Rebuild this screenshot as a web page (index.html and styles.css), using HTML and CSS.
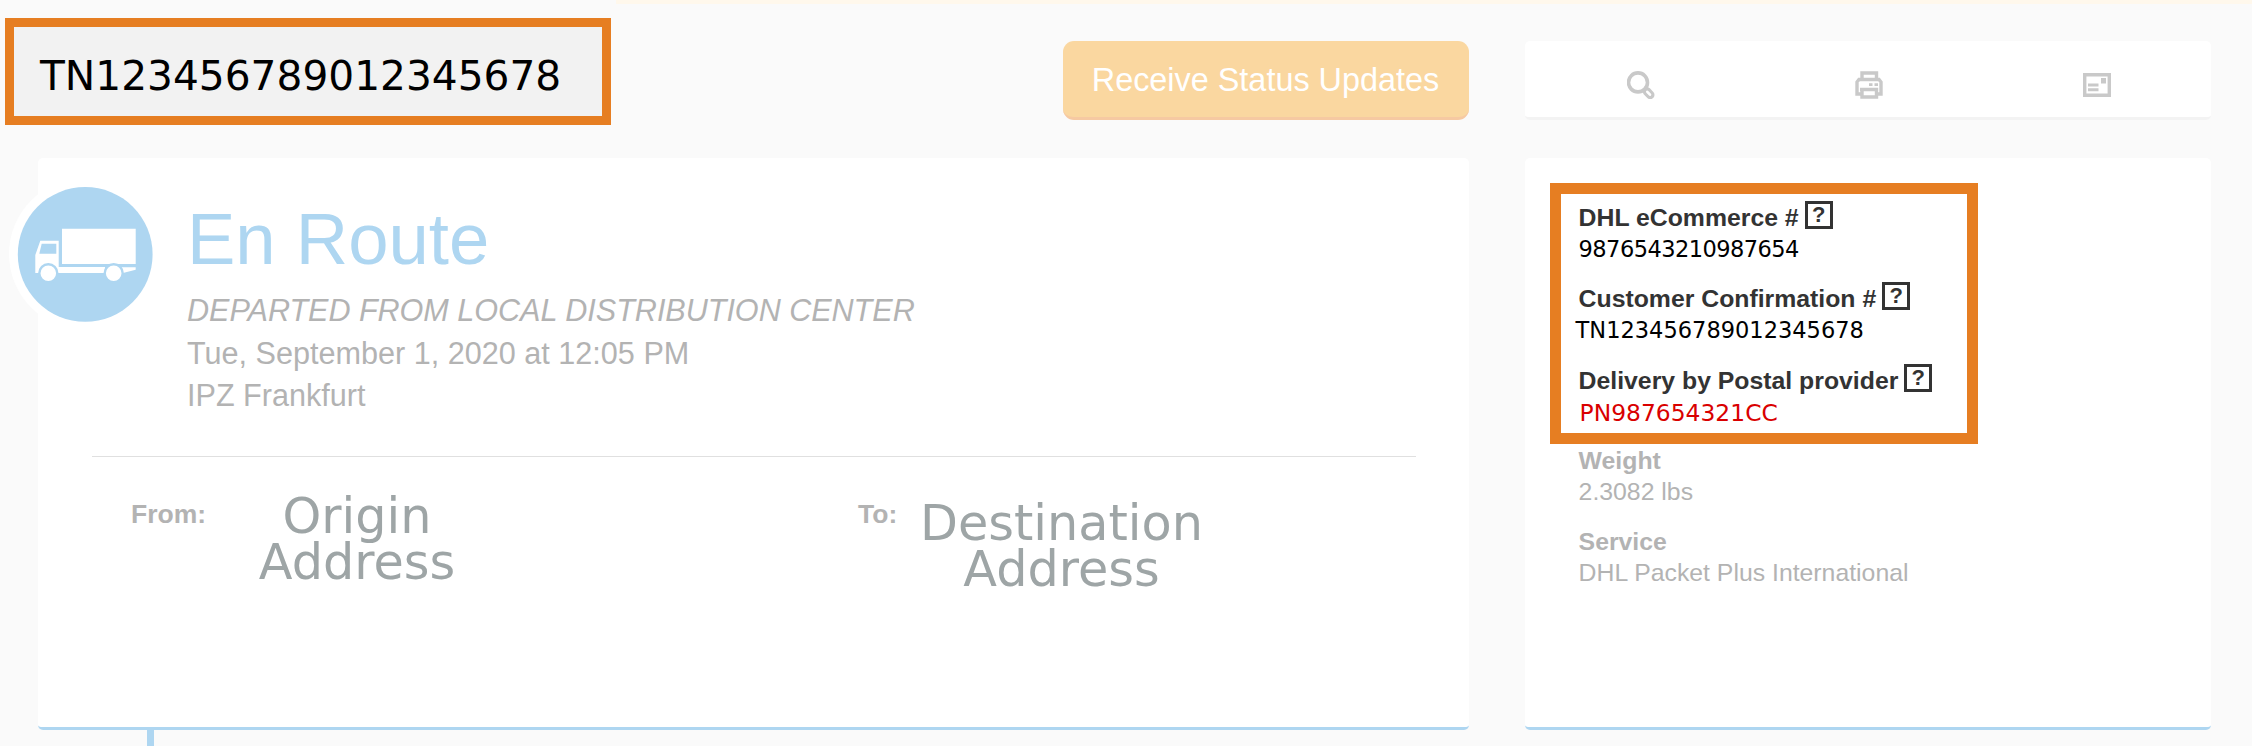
FILE: index.html
```html
<!DOCTYPE html>
<html lang="en">
<head>
<meta charset="utf-8">
<title>Shipment tracking</title>
<link rel="stylesheet" href="styles.css">
</head>
<body>
<div class="strip"></div>
<div class="page">
  <header class="topbar">
    <div class="tracking-number">TN123456789012345678</div>
    <button class="updates">Receive Status Updates</button>
  </header>
  <nav class="tools">
    <svg class="tool" viewBox="0 0 28 28"><path d="M20 20.500l3.200 3.400" stroke="#c9c9c9" stroke-width="8.600" stroke-linecap="round"/><path d="M20.300 20.800l2.700 2.900" stroke="#fff" stroke-width="2.600" stroke-linecap="round"/><circle cx="11" cy="11.400" r="9.500" fill="#fff" stroke="#c9c9c9" stroke-width="3.600"/></svg>
    <svg class="tool" viewBox="0 0 28 28" fill="none" stroke="#c9c9c9" stroke-width="3.400"><path d="M7 8.500V2h14.500v6.500M6.500 23H2V11l2-2.500h20l2 2.500v12h-4.500M7 18.500h14.500V26H7zM5 18.500h18"/><path d="M14 13.600h3.500M19.500 13.600H23" stroke-width="2.800"/></svg>
    <svg class="tool" viewBox="0 0 28 28" fill="none" stroke="#c9c9c9" stroke-width="3.400"><path d="M1.700 3.700h24.600v20.600H1.700z"/><path d="M5 14h10.500M5 18.700h10.500" stroke-width="3"/><path d="M20.500 7v5.500" stroke-width="5"/></svg>
  </nav>

  <main class="card status">
    <svg class="badge" viewBox="0 0 152 152">
      <circle cx="76" cy="76" r="76" fill="#fff"/>
      <circle cx="76.200" cy="76.400" r="67.400" fill="#aed6f1"/>
      <g fill="#fff">
        <path d="M53 50.700h73.700V86H53z"/>
        <path d="M26.300 95V77l5-14.300h18.400V89H96v6H26.300z"/>
        <path d="M112 89.300h14.700v2.400L114 95z"/>
      </g>
      <path d="M32.700 65.700h14.600v10H30.300z" fill="#aed6f1"/>
      <g fill="#fff" stroke="#aed6f1" stroke-width="2.400">
        <circle cx="39.300" cy="95.200" r="9"/>
        <circle cx="104.700" cy="95.200" r="9"/>
      </g>
    </svg>
    <section class="summary">
      <h1 class="headline">En Route</h1>
      <p class="line event">DEPARTED FROM LOCAL DISTRIBUTION CENTER</p>
      <p class="line">Tue, September 1, 2020 at 12:05 PM</p>
      <p class="line">IPZ Frankfurt</p>
    </section>
    <section class="route">
      <div class="leg from"><span class="leg-label">From:</span><div class="address">Origin<br>Address</div></div>
      <div class="leg to"><span class="leg-label">To:</span><div class="address">Destination<br>Address</div></div>
    </section>
  </main>

  <aside class="card details">
    <div class="callout">
      <div class="item first"><div class="label">DHL eCommerce #<span class="help">?</span></div><div class="number">9876543210987654</div></div>
      <div class="item second"><div class="label">Customer Confirmation #<span class="help">?</span></div><div class="number">TN123456789012345678</div></div>
      <div class="item third"><div class="label">Delivery by Postal provider<span class="help">?</span></div><div class="number">PN987654321CC</div></div>
    </div>
    <div class="facts">
      <div class="fact"><div class="label">Weight</div><div class="value">2.3082 lbs</div></div>
      <div class="fact"><div class="label">Service</div><div class="value">DHL Packet Plus International</div></div>
    </div>
  </aside>
</div>
<div class="timeline"></div>
</body>
</html>
```
FILE: styles.css
```css
* { box-sizing: border-box; }

body {
  margin: 0;
  width: 2252px;
  height: 746px;
  overflow: hidden;
  background: #fafafa;
  font-family: "Liberation Sans", Arial, sans-serif;
  color: #b3b3b3;
}

h1, p { margin: 0; font-weight: normal; }

.strip { height: 4px; margin-left: 616px; background: #fff8ec; }

.page {
  display: grid;
  grid-template-columns: 1431px 686px;
  grid-template-rows: 154px 572px;
  column-gap: 56px;
  padding-left: 38px;
}

.topbar { display: flex; align-items: flex-start; }

.tracking-number {
  width: 606px;
  height: 107px;
  margin: 14px 0 0 -33px;
  padding: 9px 0 0 26px;
  border: 9px solid #e67e22;
  background: #f2f2f2;
  color: #000;
  font: 40.700px/80px "DejaVu Sans", sans-serif;
}

.updates {
  width: 406px;
  height: 79px;
  margin: 37px 0 0 auto;
  padding: 1px 1px 0 0;
  border: 0;
  border-bottom: 3px solid #f6c9a2;
  border-radius: 11px;
  background: #fad7a0;
  color: #fff;
  font: 32.400px/74px "Liberation Sans", Arial, sans-serif;
}

.tools {
  display: grid;
  grid-template-columns: repeat(3, 1fr);
  place-items: center;
  height: 79px;
  margin-top: 37px;
  padding: 11px 0 0 2px;
  border-bottom: 3px solid #f3f3f3;
  border-radius: 5px;
  background: #fff;
}

.tool { width: 28px; height: 28px; }

.card {
  position: relative;
  border-bottom: 3px solid #aed6f1;
  border-radius: 5px;
  background: #fff;
}

.badge {
  position: absolute;
  left: -29px;
  top: 20px;
  width: 152px;
  height: 152px;
}

.summary {
  height: 299px;
  margin: 0 53px 0 54px;
  padding: 39px 0 0 95px;
  border-bottom: 1px solid #e0e0e0;
}

.headline {
  margin-bottom: 8px;
  color: #aed6f1;
  font-size: 72.500px;
  line-height: 84px;
}

.line { font-size: 30.600px; line-height: 42.500px; }
.event { font-style: italic; letter-spacing: -0.040px; }

.route { display: grid; grid-template-columns: 727px 1fr; padding-left: 93px; }
.leg { display: flex; align-items: flex-start; }
.leg-label { padding-top: 41px; font-size: 26.500px; font-weight: bold; line-height: 32px; }
.from .leg-label { width: 126px; }
.to .leg-label { width: 62px; }

.address {
  width: 200px;
  padding-top: 36px;
  color: #9ea5a6;
  font: 49.300px/46px "DejaVu Sans", sans-serif;
  text-align: center;
}
.to .address { width: 283px; padding-top: 43px; white-space: nowrap; }

.callout {
  width: 428px;
  height: 261px;
  margin: 25px 0 0 25px;
  padding: 7px 0 0 17.600px;
  border: 11px solid #e67e22;
  color: #333;
}

.label {
  display: flex;
  font-size: 24.800px;
  font-weight: bold;
  line-height: 34px;
}

.help {
  width: 28px;
  height: 28px;
  margin-left: 6px;
  border: 3px solid #333;
  font-size: 22px;
  line-height: 22px;
  text-align: center;
}

.number { color: #000; font: 22.500px/29px "DejaVu Sans", sans-serif; }
.first { height: 80.500px; }
.second { height: 82.500px; }
.first .number { line-height: 28px; letter-spacing: -0.550px; }
.second .number { margin-left: -3px; }
.third .number { margin-left: 1px; color: #d90000; font-size: 23.400px; line-height: 31px; }

.facts { display: grid; gap: 19.500px; padding-left: 53.600px; }
.value { font-size: 24.800px; line-height: 27px; }

.timeline { width: 7px; height: 16px; margin-left: 147px; background: #aed6f1; }
```
